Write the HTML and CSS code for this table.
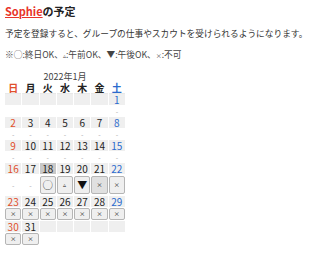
FILE: index.html
```html
<!DOCTYPE html>
<html lang="ja">
<head>
<meta charset="utf-8">
<link rel="stylesheet" href="styles.css">
</head>
<body>
<h1 class="title"><a class="name" href="#">Sophie</a>の予定</h1>
<p class="lead">予定を登録すると、グループの仕事やスカウトを受けられるようになります。</p>
<p class="legend">※◯:終日OK、<span class="tri">▵</span>:午前OK、▼:午後OK、<span class="x">×</span>:不可</p>
<table class="cal">
<caption>2022年1月</caption>
<thead>
<tr><th class="sun">日</th><th>月</th><th>火</th><th>水</th><th>木</th><th>金</th><th class="sat">土</th></tr>
</thead>
<tbody>
<tr class="d"><td></td><td></td><td></td><td></td><td></td><td></td><td class="sat">1</td></tr>
<tr class="s"><td></td><td></td><td></td><td></td><td></td><td></td><td>-</td></tr>
<tr class="d"><td class="sun">2</td><td>3</td><td>4</td><td>5</td><td>6</td><td>7</td><td class="sat">8</td></tr>
<tr class="s"><td>-</td><td>-</td><td>-</td><td>-</td><td>-</td><td>-</td><td>-</td></tr>
<tr class="d"><td class="sun">9</td><td>10</td><td>11</td><td>12</td><td>13</td><td>14</td><td class="sat">15</td></tr>
<tr class="s"><td>-</td><td>-</td><td>-</td><td>-</td><td>-</td><td>-</td><td>-</td></tr>
<tr class="d"><td class="sun">16</td><td>17</td><td class="today">18</td><td>19</td><td>20</td><td>21</td><td class="sat">22</td></tr>
<tr class="s btns"><td>-</td><td>-</td><td><span class="b big">◯</span></td><td><span class="b big sm">▵</span></td><td><span class="b big">▼</span></td><td><span class="b big sm on">×</span></td><td><span class="b big sm">×</span></td></tr>
<tr class="d"><td class="sun">23</td><td>24</td><td>25</td><td>26</td><td>27</td><td>28</td><td class="sat">29</td></tr>
<tr class="s btns"><td><span class="b sm">×</span></td><td><span class="b sm">×</span></td><td><span class="b sm">×</span></td><td><span class="b sm">×</span></td><td><span class="b sm">×</span></td><td><span class="b sm">×</span></td><td><span class="b sm">×</span></td></tr>
<tr class="d"><td class="sun">30</td><td>31</td><td></td><td></td><td></td><td></td><td></td></tr>
<tr class="s btns"><td><span class="b sm">×</span></td><td><span class="b sm">×</span></td><td></td><td></td><td></td><td></td><td></td></tr>
</tbody>
</table>
</body>
</html>
```
FILE: styles.css
```css
body {
  margin: 4px 5px;
  font-family: "Noto Sans CJK JP", "Noto Sans", sans-serif;
  font-size: 8.7px;
  color: #333;
  background: #fff;
}
.title {
  margin: 0;
  font-size: 11px;
  line-height: 14px;
  font-weight: bold;
  color: #222;
}
.name {
  color: #e8342a;
  text-decoration: underline;
}
.lead {
  margin: 10px 0 0;
  line-height: 12px;
  white-space: nowrap;
}
.legend {
  margin: 9px 0 0;
  line-height: 12px;
  color: #444;
}
.tri, .x { font-size: 6px; }
.cal {
  margin-top: 9px;
  border-collapse: separate;
  border-spacing: 1px;
  width: 122px;
  table-layout: fixed;
  margin-left: -1px;
}
.cal caption {
  font-size: 9px;
  line-height: 11px;
  color: #444;
}
.cal th {
  font-size: 10px;
  font-weight: bold;
  color: #222;
  height: 10px;
  line-height: 10px;
  padding: 0;
  text-align: center;
  box-shadow: 0 1px 0 #e8e8e8;
}
.cal td {
  padding: 0;
  text-align: center;
  vertical-align: middle;
}
.cal .d td {
  background: #efefef;
  font-size: 10px;
  color: #222;
  height: 11px;
  line-height: 11px;
}
.cal .s td {
  color: #aaa;
  font-size: 7px;
  height: 10px;
  line-height: 10px;
}
.cal .btns td {
  height: auto;
  line-height: 10px;
}
.cal .d td.today { background: #c8c8c8; }
.cal .sun { color: #e0502c; }
.cal .sat { color: #2a6acd; }
.cal .d td.sun { color: #e0502c; }
.cal .d td.sat { color: #2a6acd; }
.b {
  display: block;
  height: 10px;
  line-height: 10px;
  background: #efefef;
  border: 1px solid #b5b5b5;
  border-radius: 2px;
  color: #111;
  font-size: 10px;
}
.b.big {
  height: 16px;
  line-height: 16px;
  margin: 1px 0;
}
.b.sm { font-size: 6px; }
.b.on { background: #e0e0e0; }
```
